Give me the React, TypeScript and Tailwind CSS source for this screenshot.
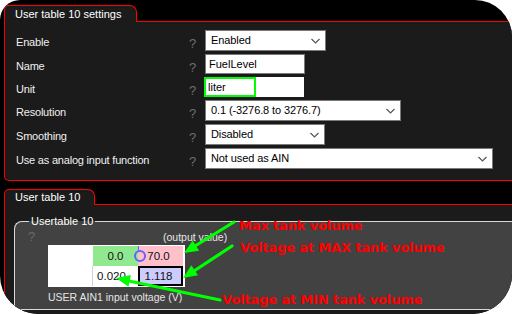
import React from "react";

const Chevron = () => (
  <svg width="9" height="6" viewBox="0 0 9 6" className="shrink-0">
    <polyline points="0.5,1 4.5,5 8.5,1" fill="none" stroke="#555" strokeWidth="1.2" />
  </svg>
);

function Select({ value, w }: { value: string; w: string }) {
  return (
    <div className={`${w} h-[21px] bg-white border border-[#7a7a7a] flex items-center pl-[5px] pr-[5px] text-black text-[11px] tracking-[-0.1px]`}>
      <span className="flex-1 truncate">{value}</span>
      <Chevron />
    </div>
  );
}

function Row({ label, children, h }: { label: string; children: React.ReactNode; h: string }) {
  return (
    <div className={`flex items-start ${h}`}>
      <div className="w-[184px] pl-[11px] pt-[4px] text-[11px] tracking-[-0.2px] text-[#f0f0f0]">{label}</div>
      <div className="w-[16px] pt-[4px] text-[13px] text-[#6e6e6e]">?</div>
      {children}
    </div>
  );
}

const redFont = { fontFamily: '"DejaVu Sans", Verdana, sans-serif' };

export default function App() {
  return (
    <div className="w-[512px] h-[314px] bg-white relative overflow-hidden" style={{ fontFamily: '"Liberation Sans", Arial, sans-serif' }}>
      <div className="h-full w-full bg-black rounded-tl-[20px] rounded-tr-[37px] rounded-br-[40px] rounded-bl-[38px] overflow-hidden pl-[4px] pt-[5px] flex flex-col">
        {/* Tab 1 */}
        <div className="relative z-10 -mb-px w-[133px] h-[17px] border border-b-0 border-[#ff0000] rounded-tl-[5px] rounded-tr-[7px] bg-[#1b1b1b] text-white text-[11px] pl-[10px] leading-[16px]">
          User table 10 settings
        </div>
        <div className="h-[160px] border border-r-0 border-[#ff0000] rounded-bl-[5px] bg-[#1b1b1b] pt-[8px] flex flex-col">
          <Row label="Enable" h="h-[24px]">
            <Select value="Enabled" w="w-[121px]" />
          </Row>
          <Row label="Name" h="h-[23px]">
            <div className="w-[100px] h-[20px] bg-white border border-[#7a7a7a] pl-[3px] text-[11px] text-black leading-[18px]">FuelLevel</div>
          </Row>
          <Row label="Unit" h="h-[23px]">
            <div className="relative -ml-px w-[100px] h-[20px] bg-white pl-[4px] text-[11px] text-black leading-[20px]">
              liter
              <div className="absolute left-0 top-0 w-[52px] h-[20px] border-2 border-[#00ff00]" />
            </div>
          </Row>
          <Row label="Resolution" h="h-[24px]">
            <Select value="0.1 (-3276.8 to 3276.7)" w="w-[196px]" />
          </Row>
          <Row label="Smoothing" h="h-[24px]">
            <Select value="Disabled" w="w-[120px]" />
          </Row>
          <Row label="Use as analog input function" h="h-[24px]">
            <Select value="Not used as AIN" w="w-[288px]" />
          </Row>
        </div>

        {/* Tab 2 */}
        <div className="relative z-10 mt-[8px] -mb-px w-[91px] h-[16px] border border-b-0 border-[#ff0000] rounded-tl-[5px] rounded-tr-[7px] bg-[#1b1b1b] text-white text-[11px] pl-[10px] leading-[15px]">
          User table 10
        </div>
        <div className="flex-1 border border-r-0 border-b-0 border-[#ff0000] bg-[#1b1b1b] pt-[9px] pl-[9px] flex flex-col">
          <fieldset className="h-[96px] border border-r-0 border-[#d8d8d8] rounded-tl-[8px] bg-[#424242]">
            <legend className="ml-[14px] px-[2px] text-[11px] text-white leading-[14px]">Usertable 10</legend>
            <div className="flex items-start h-[15px] mt-[2px]">
              <span className="ml-[13px] w-[20px] text-[13px] text-[#6a6a6a] leading-[14px]">?</span>
              <span className="ml-[115px] text-[10.5px] text-[#e6e6e6] leading-[14px]">(output value)</span>
            </div>
            <div className="relative ml-[33px] w-[137px] bg-white p-px">
              <div className="grid grid-cols-[44px_45px_45px] grid-rows-[20px_20px] text-[11.5px] text-[#111] leading-[20px]">
                <div className="bg-white" />
                <div className="bg-[#90e890] text-center">0.0</div>
                <div className="bg-[#ffc0cb] text-center pr-[4px]">70.0</div>
                <div className="bg-white border-r border-[#d0d0d0]" />
                <div className="bg-white text-center pr-[8px]">0.020</div>
                <div className="bg-[#ccccff] border-2 border-black text-center pr-[4px] leading-[16px]">1.118</div>
              </div>
              <div className="absolute left-[90px] top-px w-px h-[5px] bg-[#6060ff]" />
              <div className="absolute left-[86px] top-[5px] w-[12px] h-[12px] rounded-full border-2 border-[#6464ff]" />
            </div>
            <div className="ml-[33px] mt-[3px] text-[10.5px] text-[#e6e6e6] leading-[14px]">USER AIN1 input voltage (V)</div>
          </fieldset>
        </div>
      </div>

      {/* annotations */}
      <svg className="absolute inset-0 pointer-events-none" width="512" height="314">
        <g stroke="#00ff00" strokeWidth="3.2" strokeLinecap="round">
          <line x1="234" y1="222" x2="195" y2="246" />
          <line x1="232" y1="246" x2="194" y2="271" />
          <line x1="220" y1="300" x2="129" y2="281" />
        </g>
        <g fill="#00ff00">
          <polygon points="184,253 192.7,240.5 199.1,250.7" />
          <polygon points="183,278 191.4,265.3 198,275.3" />
          <polygon points="116,278 130.9,275 128.5,286.8" />
        </g>
      </svg>
      <div className="absolute left-[239px] top-[218px] text-[#ff0000] text-[13px] font-bold leading-[16px] tracking-[-0.15px]" style={redFont}>Max tank volume</div>
      <div className="absolute left-[240px] top-[240px] text-[#ff0000] text-[13px] font-bold leading-[16px] tracking-[-0.15px]" style={redFont}>Voltage at MAX tank volume</div>
      <div className="absolute left-[222px] top-[292px] text-[#ff0000] text-[13px] font-bold leading-[16px] tracking-[-0.15px]" style={redFont}>Voltage at MIN tank volume</div>
    </div>
  );
}
